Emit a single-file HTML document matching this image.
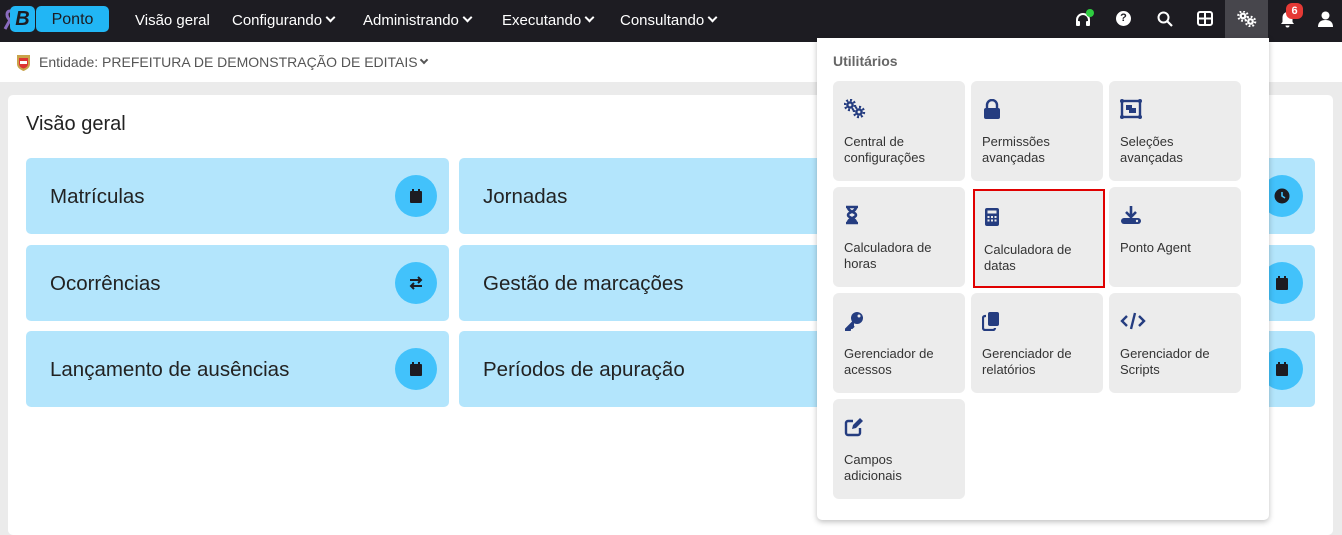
<!DOCTYPE html>
<html><head><meta charset="utf-8"><style>
*{box-sizing:border-box;margin:0;padding:0}
body{width:1342px;height:528px;overflow:hidden;background:#ebebeb;font-family:"Liberation Sans","DejaVu Sans",sans-serif;position:relative}
.nav{position:absolute;left:0;top:0;width:1342px;height:42px;background:#1d1c22}
.nav .it{position:absolute;top:12px;color:#fff;font-size:15px}
.ent{position:absolute;left:0;top:42px;width:1342px;height:40px;background:#fff}
.card{position:absolute;left:8px;top:95px;width:1325px;height:440px;background:#fff;border-radius:5px}
.tile{position:absolute;width:423px;height:76px;background:#b3e5fc;border-radius:5px}
.tile span{position:absolute;left:24px;top:27px;font-size:20.5px;color:#222}
.circ{position:absolute;right:12px;top:17px;width:42px;height:42px;border-radius:50%;background:#42c2fb}
.circ svg{position:absolute;left:13px;top:13px}
.dd{position:absolute;left:817px;top:38px;width:452px;height:482px;background:#fff;border-radius:0 0 5px 5px;box-shadow:0 2px 6px rgba(0,0,0,.25)}
.u{position:absolute;width:132px;height:100px;background:#ececec;border-radius:6px}
.u svg{position:absolute;left:11px;top:18px}
.u p{position:absolute;left:11px;top:53px;font-size:13px;line-height:16px;color:#333}
.chev{display:inline-block;width:7px;height:7px;border-right:2px solid #fff;border-bottom:2px solid #fff;transform:rotate(45deg);margin-left:5px;position:relative;top:-4px}
</style></head><body>
<div class="nav">
 <svg style="position:absolute;left:3px;top:9px" width="14" height="22" viewBox="0 0 14 22"><path d="M7 2C3 2 3 8 7 11L2 20M7 2c4 0 4 6 0 9l5 9" stroke="#8a6bbf" stroke-width="3" fill="none"/></svg>
 <div style="position:absolute;left:10px;top:6px;width:25px;height:26px;background:#21b6f5;border-radius:5px;color:#1d1c22;font-weight:bold;font-style:italic;font-size:20px;text-align:center;line-height:26px">B</div>
 <div style="position:absolute;left:36px;top:6px;width:73px;height:26px;background:#21b6f5;border-radius:5px;color:#1d1c22;font-size:16px;text-align:center;line-height:27px">Ponto</div>
 <div class="it" style="left:135px">Visão geral</div>
 <div class="it" style="left:232px">Configurando<i class="chev"></i></div>
 <div class="it" style="left:363px">Administrando<i class="chev"></i></div>
 <div class="it" style="left:502px">Executando<i class="chev"></i></div>
 <div class="it" style="left:620px">Consultando<i class="chev"></i></div>
 <svg style="position:absolute;left:1075px;top:12px" width="16" height="16" viewBox="0 0 16 16"><path d="M2 10V8a6 6 0 0 1 12 0v2" stroke="#fff" stroke-width="2" fill="none"/><rect x="1" y="9" width="4" height="5" rx="1" fill="#fff"/><rect x="11" y="9" width="4" height="5" rx="1" fill="#fff"/></svg>
 <div style="position:absolute;left:1086px;top:9px;width:8px;height:8px;border-radius:50%;background:#2ecc40"></div>
 <div style="position:absolute;left:1116px;top:11px;width:15px;height:15px;border-radius:50%;background:#fff;color:#1d1c22;font-size:11px;font-weight:bold;text-align:center;line-height:15px">?</div>
 <svg style="position:absolute;left:1157px;top:11px" width="16" height="16" viewBox="0 0 16 16"><circle cx="6.5" cy="6.5" r="5" stroke="#fff" stroke-width="2" fill="none"/><path d="M10 10l5 5" stroke="#fff" stroke-width="2.2"/></svg>
 <svg style="position:absolute;left:1197px;top:11px" width="16" height="15" viewBox="0 0 16 15"><rect x="1" y="1" width="14" height="13" rx="2" stroke="#fff" stroke-width="2" fill="none"/><path d="M8 1v13M1 7.5h14" stroke="#fff" stroke-width="2"/></svg>
 <div style="position:absolute;left:1225px;top:0;width:43px;height:38px;background:#47464c"></div>
 <svg style="position:absolute;left:1237px;top:11px" width="20" height="16" viewBox="0 0 20 16"><g fill="#fff"><circle cx="6" cy="5" r="3.4"/><circle cx="6" cy="5" r="4.7" fill="none" stroke="#fff" stroke-width="2.2" stroke-dasharray="1.8 1.9"/><circle cx="13.5" cy="10.5" r="3.4"/><circle cx="13.5" cy="10.5" r="4.7" fill="none" stroke="#fff" stroke-width="2.2" stroke-dasharray="1.8 1.9"/></g><circle cx="6" cy="5" r="1.2" fill="#47464c"/><circle cx="13.5" cy="10.5" r="1.2" fill="#47464c"/></svg>
 <svg style="position:absolute;left:1280px;top:11px" width="15" height="17" viewBox="0 0 15 17"><path d="M7.5 1a5 5 0 0 0-5 5v5L1 13h13l-1.5-2V6a5 5 0 0 0-5-5zM5.5 14.5a2 2 0 0 0 4 0z" fill="#fff"/></svg>
 <div style="position:absolute;left:1286px;top:3px;width:17px;height:16px;border-radius:6px;background:#e53935;color:#fff;font-size:11px;font-weight:bold;text-align:center;line-height:16px">6</div>
 <svg style="position:absolute;left:1318px;top:11px" width="15" height="16" viewBox="0 0 15 16"><circle cx="7.5" cy="4.5" r="4" fill="#fff"/><path d="M0 16c0-5 3-7 7.5-7S15 11 15 16z" fill="#fff"/></svg>
</div>
<div class="ent">
 <svg style="position:absolute;left:16px;top:11px" width="15" height="18" viewBox="0 0 15 18"><path d="M1 2h13v9c0 4-4 6-6.5 7C5 17 1 15 1 11z" fill="#c9a34a"/><path d="M3 5h9v6c0 2-2 4-4.5 4.5C5 15 3 13 3 11z" fill="#d33"/><rect x="4" y="8" width="7" height="3" fill="#fff"/></svg>
 <div style="position:absolute;left:39px;top:12px;font-size:14px;color:#555">Entidade: PREFEITURA DE DEMONSTRAÇÃO DE EDITAIS<i class="chev" style="border-color:#555;width:6px;height:6px;margin-left:3px"></i></div>
</div>
<div class="card">
 <div style="position:absolute;left:18px;top:18px;font-size:20px;color:#222">Visão geral</div>
</div>
<div class="tile" style="left:26px;top:158px"><span>Matrículas</span><div class="circ"><svg width="16" height="16" viewBox="0 0 16 16"><rect x="2" y="3" width="12" height="12" rx="1" fill="#1d1c22"/><rect x="4" y="1" width="2" height="3" fill="#1d1c22"/><rect x="10" y="1" width="2" height="3" fill="#1d1c22"/></svg></div></div>
<div class="tile" style="left:26px;top:245px"><span>Ocorrências</span><div class="circ"><svg width="16" height="16" viewBox="0 0 16 16"><path d="M2 5h11M10 2l3 3-3 3M14 11H3M6 8l-3 3 3 3" stroke="#1d1c22" stroke-width="2" fill="none"/></svg></div></div>
<div class="tile" style="left:26px;top:331px"><span>Lançamento de ausências</span><div class="circ"><svg width="16" height="16" viewBox="0 0 16 16"><rect x="2" y="3" width="12" height="12" rx="1" fill="#1d1c22"/><rect x="4" y="1" width="2" height="3" fill="#1d1c22"/><rect x="10" y="1" width="2" height="3" fill="#1d1c22"/></svg></div></div>
<div class="tile" style="left:459px;top:158px"><span>Jornadas</span></div>
<div class="tile" style="left:459px;top:245px"><span>Gestão de marcações</span></div>
<div class="tile" style="left:459px;top:331px"><span>Períodos de apuração</span></div>
<div class="tile" style="left:892px;top:158px"><div class="circ"><svg width="16" height="16" viewBox="0 0 16 16"><circle cx="8" cy="8" r="7.5" fill="#1d1c22"/><path d="M8 4v4l3 2" stroke="#42c2fb" stroke-width="1.6" fill="none"/></svg></div></div>
<div class="tile" style="left:892px;top:245px"><div class="circ"><svg width="16" height="16" viewBox="0 0 16 16"><rect x="2" y="3" width="12" height="12" rx="1" fill="#1d1c22"/><rect x="4" y="1" width="2" height="3" fill="#1d1c22"/><rect x="10" y="1" width="2" height="3" fill="#1d1c22"/></svg></div></div>
<div class="tile" style="left:892px;top:331px"><div class="circ"><svg width="16" height="16" viewBox="0 0 16 16"><rect x="2" y="3" width="12" height="12" rx="1" fill="#1d1c22"/><rect x="4" y="1" width="2" height="3" fill="#1d1c22"/><rect x="10" y="1" width="2" height="3" fill="#1d1c22"/></svg></div></div>
<div class="dd">
 <div style="position:absolute;left:16px;top:15px;font-size:14px;font-weight:bold;color:#666">Utilitários</div>
 <div class="u" style="left:16px;top:43px"><svg width="26" height="20" viewBox="0 0 26 20"><g fill="#253d80"><circle cx="6" cy="6" r="3.8"/><circle cx="6" cy="6" r="5" fill="none" stroke="#253d80" stroke-width="2.4" stroke-dasharray="2 1.9"/><circle cx="15" cy="13" r="3.8"/><circle cx="15" cy="13" r="5" fill="none" stroke="#253d80" stroke-width="2.4" stroke-dasharray="2 1.9"/></g><circle cx="6" cy="6" r="1.4" fill="#ececec"/><circle cx="15" cy="13" r="1.4" fill="#ececec"/></svg><p>Central de<br>configurações</p></div>
 <div class="u" style="left:154px;top:43px"><svg width="20" height="20" viewBox="0 0 20 20"><path d="M5 9V6a5 5 0 0 1 10 0v3" stroke="#253d80" stroke-width="2.4" fill="none"/><rect x="2" y="9" width="16" height="11" rx="2" fill="#253d80"/></svg><p>Permissões<br>avançadas</p></div>
 <div class="u" style="left:292px;top:43px"><svg width="22" height="20" viewBox="0 0 22 20"><rect x="2" y="2" width="18" height="16" fill="none" stroke="#253d80" stroke-width="2.4"/><circle cx="2" cy="2" r="2" fill="#253d80"/><circle cx="20" cy="2" r="2" fill="#253d80"/><circle cx="2" cy="18" r="2" fill="#253d80"/><circle cx="20" cy="18" r="2" fill="#253d80"/><rect x="6" y="6" width="6" height="5" fill="#253d80"/><rect x="9" y="9" width="7" height="5" fill="#253d80"/></svg><p>Seleções<br>avançadas</p></div>
 <div class="u" style="left:16px;top:149px"><svg width="16" height="20" viewBox="0 0 16 20"><path d="M2 2h12M2 18h12M4 2c0 5 8 5 8 8s-8 3-8 8M12 2c0 5-8 5-8 8s8 3 8 8" stroke="#253d80" stroke-width="2.6" fill="none"/><path d="M5 17l3-4 3 4z" fill="#253d80"/></svg><p>Calculadora de<br>horas</p></div>
 <div class="u" style="left:156px;top:151px;border:2px solid #e00000;border-radius:0;width:132px;height:99px"><svg style="left:9px;top:16px" width="16" height="20" viewBox="0 0 16 20"><rect x="1" y="1" width="14" height="18" rx="2" fill="#253d80"/><rect x="3.5" y="3.5" width="9" height="3" fill="#ececec"/><g fill="#ececec"><rect x="3.5" y="9" width="2" height="2"/><rect x="7" y="9" width="2" height="2"/><rect x="10.5" y="9" width="2" height="2"/><rect x="3.5" y="12.5" width="2" height="2"/><rect x="7" y="12.5" width="2" height="2"/><rect x="10.5" y="12.5" width="2" height="2"/></g></svg><p style="left:9px;top:51px">Calculadora de<br>datas</p></div>
 <div class="u" style="left:292px;top:149px"><svg width="22" height="20" viewBox="0 0 22 20"><path d="M11 1v10M6 7l5 5 5-5" stroke="#253d80" stroke-width="2.6" fill="none"/><rect x="1" y="13" width="20" height="6" rx="3" fill="#253d80"/><circle cx="17" cy="16" r="1.2" fill="#ececec"/></svg><p>Ponto Agent</p></div>
 <div class="u" style="left:16px;top:255px"><svg width="20" height="20" viewBox="0 0 20 20"><circle cx="13" cy="7" r="6" fill="#253d80"/><path d="M10 10L2 18v2h3l1-1v-2h2l2-2" fill="#253d80" stroke="#253d80" stroke-width="2"/><circle cx="15" cy="5" r="1.5" fill="#ececec"/></svg><p>Gerenciador de<br>acessos</p></div>
 <div class="u" style="left:154px;top:255px"><svg width="18" height="20" viewBox="0 0 18 20"><rect x="6" y="1" width="11" height="14" rx="2" fill="#253d80"/><path d="M4 5H3a2 2 0 0 0-2 2v10a2 2 0 0 0 2 2h8a2 2 0 0 0 2-2" stroke="#253d80" stroke-width="2.2" fill="none"/></svg><p>Gerenciador de<br>relatórios</p></div>
 <div class="u" style="left:292px;top:255px"><svg width="26" height="20" viewBox="0 0 26 20"><path d="M7 5l-5 5 5 5M19 5l5 5-5 5M15 2l-4 16" stroke="#253d80" stroke-width="2.4" fill="none"/></svg><p>Gerenciador de<br>Scripts</p></div>
 <div class="u" style="left:16px;top:361px"><svg width="20" height="20" viewBox="0 0 20 20"><path d="M9 4H4a2 2 0 0 0-2 2v10a2 2 0 0 0 2 2h10a2 2 0 0 0 2-2v-5" stroke="#253d80" stroke-width="2.4" fill="none"/><path d="M8 12l1-4 7-7 3 3-7 7z" fill="#253d80"/></svg><p>Campos<br>adicionais</p></div>
</div>
</body></html>
